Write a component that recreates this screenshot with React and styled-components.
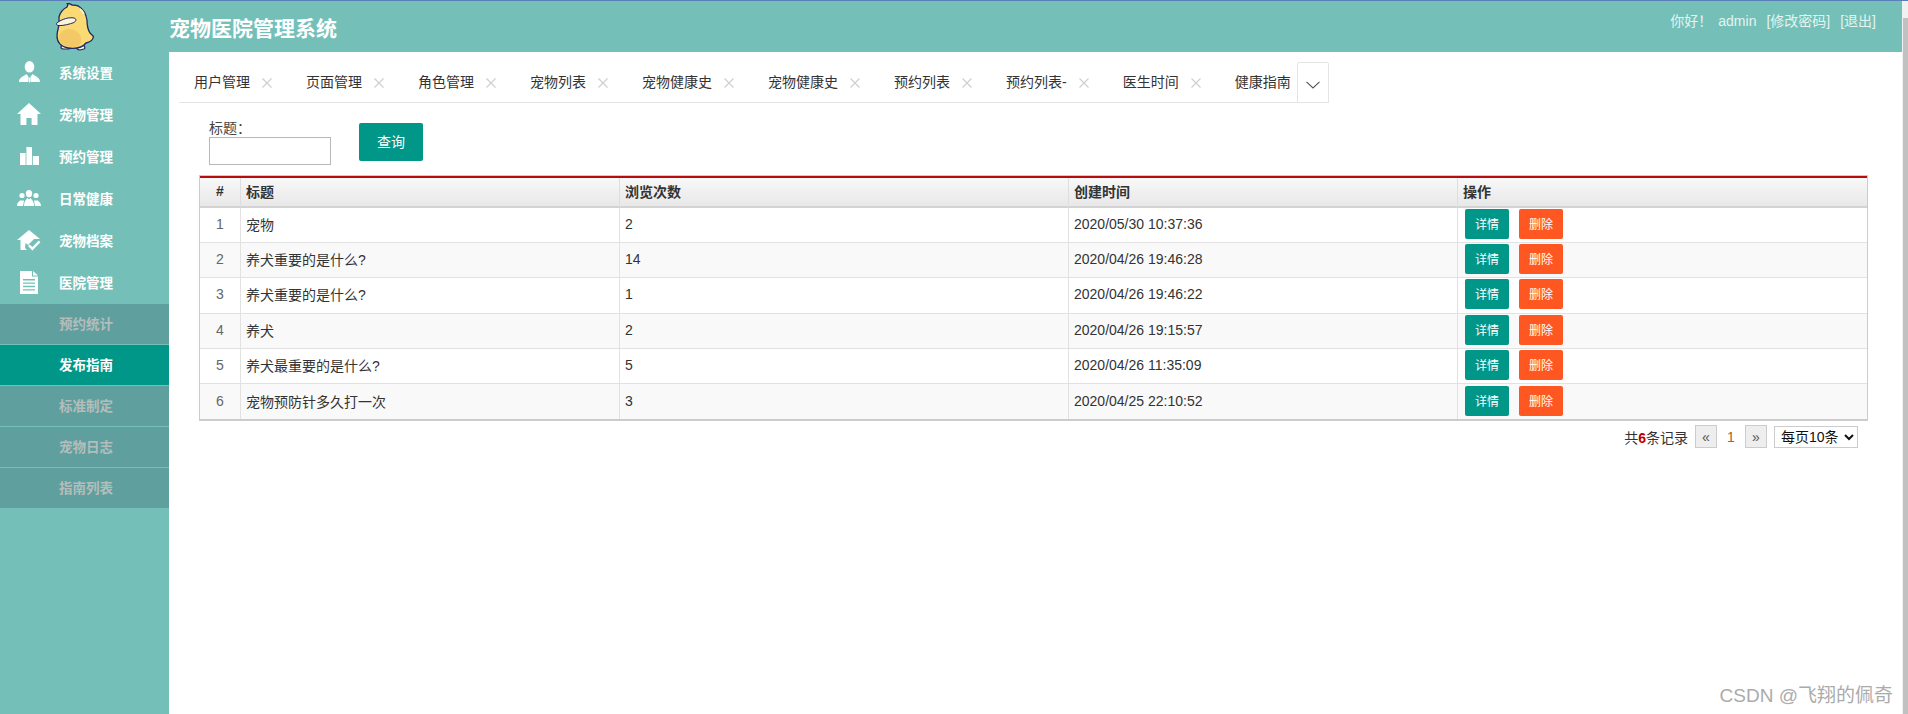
import React from "react";
import styled, { createGlobalStyle } from "styled-components";

const Global = createGlobalStyle`
  html, body { margin: 0; padding: 0; height: 100%; overflow: hidden; background: #fff; }
  body { font-family: "Liberation Sans", "Noto Sans CJK SC", sans-serif; font-size: 14px; color: #333; }
  * { box-sizing: border-box; }
`;

const Shell = styled.div`
  display: flex;
  height: 714px;
  border-top: 1px solid #5b80b8;
  overflow: hidden;
  position: relative;
`;
const Main = styled.div`
  flex: 1;
  min-width: 0;
  display: grid;
  grid-template-columns: 169px 1fr;
`;
const ScrollTrack = styled.div`
  width: 6px;
  background: #f1f1f1;
  padding: 17px 0 0 1px;
`;
const ScrollThumb = styled.div`
  height: 100%;
  background: #c1c1c1;
`;
const Sidebar = styled.aside`
  background: #74c0b9;
  display: flex;
  flex-direction: column;
`;
const LogoBox = styled.div`
  height: 50px;
  padding: 2px 0 0 56px;
`;
const NavItem = styled.div`
  height: 42px;
  display: flex;
  align-items: center;
  color: #fff;
  font-weight: 700;
  font-size: 13.5px;
`;
const NavIcon = styled.span`
  width: 59px;
  display: flex;
  justify-content: center;
  padding-right: 1px;
  flex: none;
`;
const SubMenu = styled.div`
  margin-top: 1px;
`;
const SubItem = styled.div`
  height: 41px;
  padding: 0 0 3px 59px;
  display: flex;
  align-items: center;
  font-weight: 700;
  font-size: 13.5px;
  border-bottom: 1px solid #74c0b9;
  background: ${(p) => (p.$active ? "#009688" : "#5fa09f")};
  color: ${(p) => (p.$active ? "#fff" : "#b4bdbb")};
  &:last-child { border-bottom: 0; height: 40px; }
`;
const Column = styled.div`
  min-width: 0;
  display: flex;
  flex-direction: column;
`;
const Header = styled.header`
  height: 51px;
  background: #74c0b9;
  color: #fff;
  display: flex;
  justify-content: space-between;
  flex: none;
`;
const Title = styled.div`
  font-size: 21px;
  font-weight: 700;
  line-height: 26px;
  padding-top: 15px;
`;
const UserBar = styled.div`
  display: flex;
  padding: 11px 26px 0 0;
  font-size: 14px;
  line-height: 18px;
  color: #e6f3ee;
`;
const UserText = styled.span`
  margin-left: ${(p) => p.$gap || 0}px;
`;
const TabBar = styled.div`
  margin: 10px 0 0 10px;
  width: 1150px;
  height: 41px;
  display: flex;
  border-bottom: 1px solid #e4e4e4;
`;
const TabStrip = styled.div`
  width: 1118px;
  display: flex;
  overflow: hidden;
`;
const Tab = styled.div`
  flex: none;
  display: flex;
  align-items: center;
  padding: 0 19px 2px 15px;
  font-size: 14px;
  color: #333;
  white-space: nowrap;
  &:last-child { padding-right: 6px; }
`;
const CloseMark = styled.svg`
  width: 10px;
  height: 10px;
  margin: 3px 0 0 12px;
  stroke: #cfcfcf;
  stroke-width: 1.2;
  fill: none;
`;
const MoreButton = styled.div`
  width: 32px;
  height: 41px;
  border: 1px solid #e4e4e4;
  border-radius: 2px 2px 0 0;
  display: flex;
  align-items: center;
  justify-content: center;
  padding-top: 4px;
  background: #fff;
`;
const SearchForm = styled.div`
  display: flex;
  align-items: flex-start;
  margin: 20px 0 10px 40px;
`;
const Field = styled.div`
  display: flex;
  flex-direction: column;
  width: 122px;
`;
const FieldLabel = styled.label`
  height: 14px;
  line-height: 11px;
  font-size: 14px;
  color: #444;
`;
const TextInput = styled.input`
  height: 28px;
  width: 122px;
  border: 1px solid #b8b8b8;
  background: #fff;
  outline: none;
  padding: 0 4px;
`;
const QueryButton = styled.button`
  margin-left: 28px;
  width: 64px;
  height: 38px;
  padding: 0 0 2px;
  background: #009688;
  color: #fff;
  border: 0;
  border-radius: 2px;
  font: 14px "Liberation Sans", "Noto Sans CJK SC", sans-serif;
`;
const TableBox = styled.div`
  margin-left: 30px;
  width: 1669px;
  border: 1px solid #cccccc;
  border-bottom-width: 2px;
`;
const Table = styled.table`
  width: 1667px;
  table-layout: fixed;
  border-collapse: separate;
  border-spacing: 0;
  border-top: 2px solid #b80b0b;
`;
const Th = styled.th`
  height: 30px;
  padding: 0 5px 2px;
  text-align: ${(p) => (p.$center ? "center" : "left")};
  font-size: 14px;
  font-weight: 700;
  color: #333;
  background: linear-gradient(#f8f8f8, #e8e8e8);
  border-right: 1px solid #dedede;
  border-bottom: 2px solid #d3d3d3;
  &:last-child { border-right: 0; }
`;
const Row = styled.tr`
  background: ${(p) => (p.$odd ? "#f9f9f9" : "#fff")};
`;
const Td = styled.td`
  height: 35.2px;
  padding: 0 5px 2px;
  font-size: 14px;
  color: ${(p) => (p.$center ? "#666" : "#333")};
  text-align: ${(p) => (p.$center ? "center" : "left")};
  border-right: 1px solid #e2e2e2;
  border-bottom: 1px solid #e2e2e2;
  &:last-child { border-right: 0; padding-left: 7px; }
  tr:last-child & { border-bottom: 0; }
`;
const ActionButton = styled.button`
  width: 44px;
  height: 30px;
  margin-right: 10px;
  padding: 0 0 1px;
  border: 0;
  border-radius: 2px;
  font: 12px "Liberation Sans", "Noto Sans CJK SC", sans-serif;
  color: #fff;
  vertical-align: middle;
  background: ${(p) => (p.$danger ? "#ff5722" : "#009688")};
`;
const Pager = styled.div`
  display: flex;
  justify-content: flex-end;
  align-items: center;
  width: 1659px;
  margin: 4px 0 0 30px;
  height: 23px;
  font-size: 14px;
  color: #333;
`;
const Count = styled.b`
  color: #c00000;
`;
const PageStep = styled.span`
  width: 22px;
  height: 23px;
  margin-left: ${(p) => p.$gap}px;
  display: flex;
  align-items: center;
  justify-content: center;
  background: #eeeeee;
  border: 1px solid #cccccc;
  color: #555;
`;
const PageNumber = styled.span`
  width: 28px;
  text-align: center;
  color: #a8622a;
`;
const PageSize = styled.select`
  margin-left: 7px;
  width: 84px;
  height: 22px;
  padding: 0 0 0 2px;
  background: #fff;
  border: 1px solid #cccccc;
  color: #111;
  font: 14px "Liberation Sans", "Noto Sans CJK SC", sans-serif;
  outline: none;
`;
const Watermark = styled.div`
  position: absolute;
  right: 15px;
  bottom: 6px;
  font-size: 19px;
  line-height: 24px;
  color: #ababab;
`;

const Duck = () => (
  <svg width="39" height="48" viewBox="0 0 39 48">
    <path d="M8 41 C4 42 4 46 8 46 L13 46 C15 44 13 42 11 41 Z M21 42 C20 45 21 47 24 47 L28 46 C30 45 28 42 26 41 Z" fill="#fff7e0" stroke="#1c2a66" strokeWidth="1.2" />
    <path d="M11 4 C12 2 12 1 11 0.5 C14 0.5 15 1 16 2 C19 2 21 2 23 3.5 C27 6 30 11 31 17 C31 23 32 27 34 30 L37.5 33.5 C37 37 34 39 30 40 C27 44 20 46 12 45 C5 44 1 39 1 33 C1 29 2 26 3 22 L3 14 C4 10 7 6 11 4 Z" fill="#fbd973" stroke="#1c2a66" strokeWidth="1.3" strokeLinejoin="round" />
    <path d="M3 33 C6 26 13 25 18 27 C24 29 26 35 25 39 C24 42 22 43.5 18 44 C11 44.5 3 42 3 33 Z" fill="#f3c866" />
    <path d="M24 6 C26 7 27 9 28 11" fill="none" stroke="#fff5c8" strokeWidth="1.8" />
    <path d="M0.8 20 C6 16 13 14 18 15 C21 16 20 18 18 19.5 C14 21 7 23 2 22.5 C0.5 22 0 21 0.8 20 Z" fill="#fdf3d8" stroke="#1c2a66" strokeWidth="1" strokeLinejoin="round" />
  </svg>
);

const icons = {
  user: (
    <svg width="21" height="22" viewBox="0 0 21 22" fill="#fff">
      <ellipse cx="10.5" cy="5.8" rx="4.8" ry="5.8" />
      <path d="M0 21 C0 16 5 15.5 7.6 13 L9.6 16 L9 21 Z M21 21 C21 16 16 15.5 13.4 13 L11.4 16 L12 21 Z M9.9 16.5 H11.1 L11.6 20 L10.5 22 L9.4 20 Z" />
    </svg>
  ),
  home: (
    <svg width="24" height="22" viewBox="0 0 24 22" fill="#fff">
      <path d="M12 0 L24 11 H20.5 V22 H14.6 V15 H9.4 V22 H3.5 V11 H0 Z" />
    </svg>
  ),
  chart: (
    <svg width="19" height="18" viewBox="0 0 19 18" fill="#fff">
      <rect x="0" y="6" width="5.6" height="12" />
      <rect x="6.4" y="0" width="5.6" height="18" />
      <rect x="12.8" y="9" width="6.2" height="9" />
    </svg>
  ),
  people: (
    <svg width="24" height="16" viewBox="0 0 24 16" fill="#fff">
      <circle cx="5" cy="5.5" r="2.6" />
      <circle cx="19" cy="5.5" r="2.6" />
      <ellipse cx="12" cy="3.6" rx="3.2" ry="3.6" />
      <path d="M0 16 C0 12 3 11 4 10 L5 11 L6 10 L7 11 L6 16 Z M24 16 C24 12 21 11 20 10 L19 11 L18 10 L17 11 L18 16 Z M7 16 C7 11 9.5 9.5 10.5 8 L12 9.5 L13.5 8 C14.5 9.5 17 11 17 16 Z" />
    </svg>
  ),
  homeCheck: (
    <svg width="24" height="21" viewBox="0 0 24 21" fill="#fff">
      <path d="M12 0 L23 9 L17 9 L11 15 L8.5 13 L8 18 L10 20 H3.5 V10 H0 Z" />
      <path d="M11 16 L12.6 14.4 L15.4 17 L21.8 10.6 L23.4 12.2 L15.4 20.4 Z" />
    </svg>
  ),
  doc: (
    <svg width="18" height="23" viewBox="0 0 18 23" fill="#fff">
      <path fillRule="evenodd" d="M0 0 H12 V5.5 H18 V23 H0 Z M3 8 V9.4 H15 V8 Z M3 11.4 V12.8 H15 V11.4 Z M3 14.8 V16.2 H15 V14.8 Z M3 18.2 V19.6 H15 V18.2 Z" />
      <path d="M13 0 L18 4.6 H13 Z" />
    </svg>
  ),
};

const menu = [
  ["user", "系统设置"],
  ["home", "宠物管理"],
  ["chart", "预约管理"],
  ["people", "日常健康"],
  ["homeCheck", "宠物档案"],
  ["doc", "医院管理"],
];
const subMenu = ["预约统计", "发布指南", "标准制定", "宠物日志", "指南列表"];
const tabs = ["用户管理", "页面管理", "角色管理", "宠物列表", "宠物健康史", "宠物健康史", "预约列表", "预约列表-", "医生时间", "健康指南"];
const rows = [
  ["宠物", "2", "2020/05/30 10:37:36"],
  ["养犬重要的是什么?", "14", "2020/04/26 19:46:28"],
  ["养犬重要的是什么?", "1", "2020/04/26 19:46:22"],
  ["养犬", "2", "2020/04/26 19:15:57"],
  ["养犬最重要的是什么?", "5", "2020/04/26 11:35:09"],
  ["宠物预防针多久打一次", "3", "2020/04/25 22:10:52"],
];

export default function App() {
  const lastTab = tabs.length - 1;
  return (
    <>
      <Global />
      <Shell>
        <Main>
          <Sidebar>
            <LogoBox><Duck /></LogoBox>
            {menu.map(([icon, label]) => (
              <NavItem key={label}>
                <NavIcon>{icons[icon]}</NavIcon>
                {label}
              </NavItem>
            ))}
            <SubMenu>
              {subMenu.map((label, i) => (
                <SubItem key={label} $active={i === 1}>{label}</SubItem>
              ))}
            </SubMenu>
          </Sidebar>
          <Column>
            <Header>
              <Title>宠物医院管理系统</Title>
              <UserBar>
                <UserText>你好！</UserText>
                <UserText $gap={6}>admin</UserText>
                <UserText $gap={10}>[修改密码]</UserText>
                <UserText $gap={10}>[退出]</UserText>
              </UserBar>
            </Header>
            <TabBar>
              <TabStrip>
                {tabs.map((t, i) => (
                  <Tab key={i}>
                    {t}
                    {i < lastTab && (
                      <CloseMark viewBox="0 0 10 10"><path d="M0.5 0.5 L9.5 9.5 M9.5 0.5 L0.5 9.5" /></CloseMark>
                    )}
                  </Tab>
                ))}
              </TabStrip>
              <MoreButton>
                <svg width="14" height="8" viewBox="0 0 14 8" fill="none" stroke="#555" strokeWidth="1.1">
                  <path d="M0.5 0.8 L7 7 L13.5 0.8" />
                </svg>
              </MoreButton>
            </TabBar>
            <SearchForm>
              <Field>
                <FieldLabel>标题：</FieldLabel>
                <TextInput />
              </Field>
              <QueryButton>查询</QueryButton>
            </SearchForm>
            <TableBox>
              <Table>
                <colgroup>
                  <col style={{ width: 41 }} />
                  <col style={{ width: 379 }} />
                  <col style={{ width: 449 }} />
                  <col style={{ width: 389 }} />
                  <col style={{ width: 409 }} />
                </colgroup>
                <thead>
                  <tr>
                    <Th $center>#</Th>
                    <Th>标题</Th>
                    <Th>浏览次数</Th>
                    <Th>创建时间</Th>
                    <Th>操作</Th>
                  </tr>
                </thead>
                <tbody>
                  {rows.map((r, i) => (
                    <Row key={i} $odd={i % 2 === 1}>
                      <Td $center>{i + 1}</Td>
                      <Td>{r[0]}</Td>
                      <Td>{r[1]}</Td>
                      <Td>{r[2]}</Td>
                      <Td>
                        <ActionButton>详情</ActionButton>
                        <ActionButton $danger>删除</ActionButton>
                      </Td>
                    </Row>
                  ))}
                </tbody>
              </Table>
            </TableBox>
            <Pager>
              <span>共<Count>6</Count>条记录</span>
              <PageStep $gap={7}>«</PageStep>
              <PageNumber>1</PageNumber>
              <PageStep $gap={0}>»</PageStep>
              <PageSize defaultValue="10"><option value="10">每页10条</option></PageSize>
            </Pager>
          </Column>
        </Main>
        <ScrollTrack><ScrollThumb /></ScrollTrack>
        <Watermark>CSDN @飞翔的佩奇</Watermark>
      </Shell>
    </>
  );
}
